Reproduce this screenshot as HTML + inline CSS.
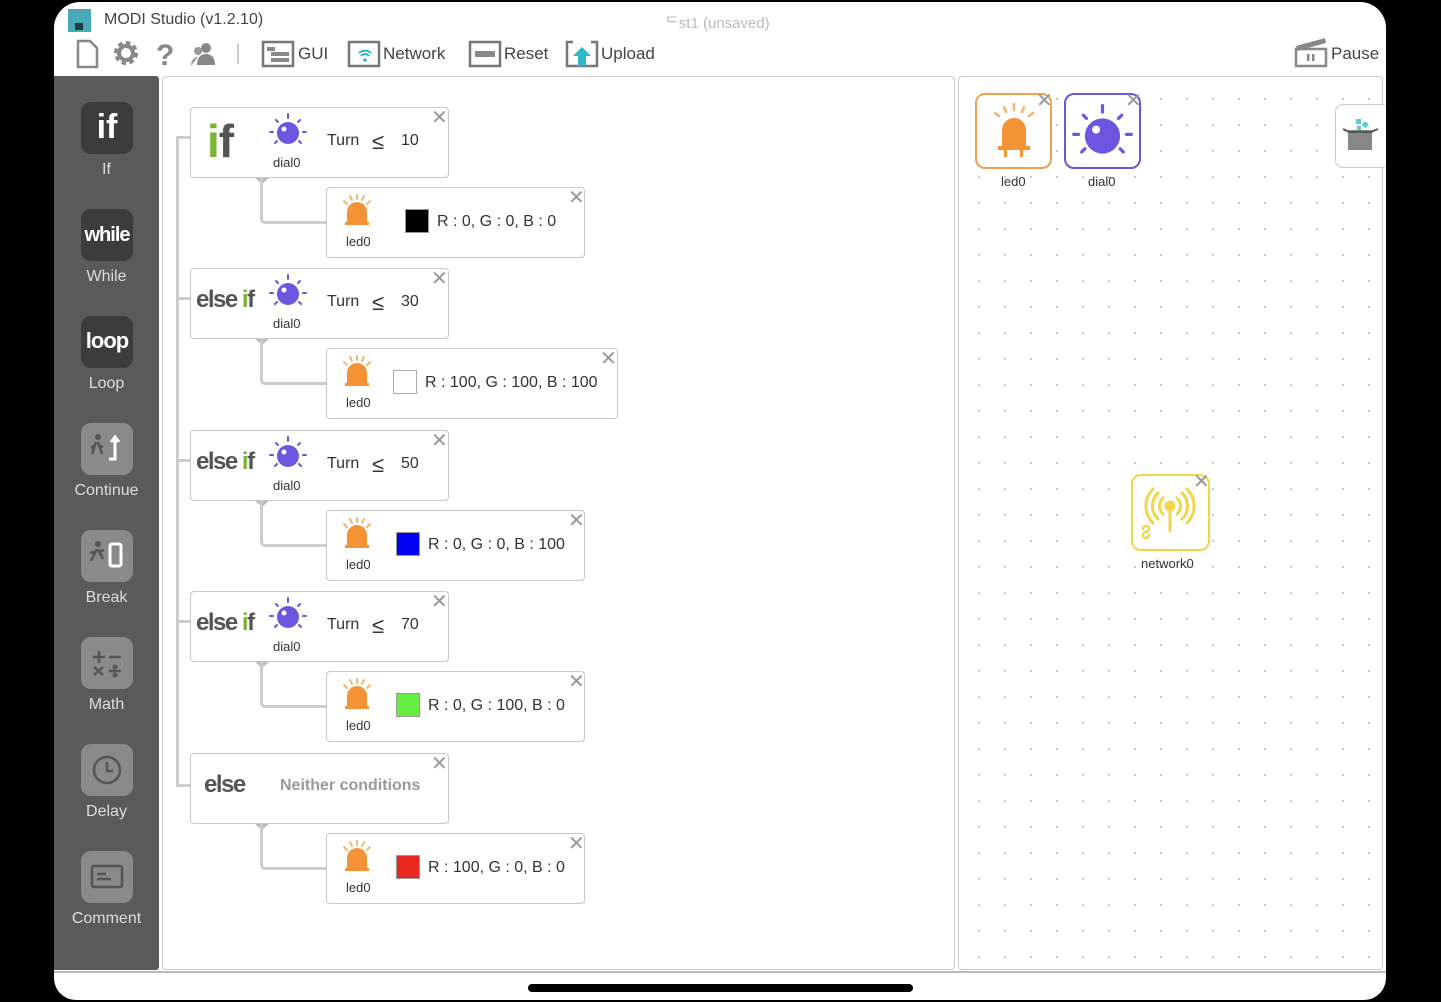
<!DOCTYPE html>
<html><head><meta charset="utf-8">
<style>
*{margin:0;padding:0;box-sizing:border-box}
body{width:1441px;height:1002px;background:#000;position:relative;overflow:hidden;font-family:"Liberation Sans","Noto Sans CJK KR",sans-serif;color:#333}
.abs{position:absolute}
#dev{left:54px;top:2px;width:1332px;height:998px;background:#fff;border-radius:26px 26px 22px 22px;overflow:hidden}
.tb{font-size:17px;color:#444}
#side{left:54px;top:76px;width:105px;height:894px;background:#5a5a5a;border-radius:0 3px 3px 0}
.sb{left:27px;width:52px;height:52px;border-radius:10px}
.sl{width:105px;left:0;text-align:center;color:#ddd;font-size:16px}
#canvas{left:162px;top:76px;width:793px;height:894px;border:1px solid #ccc;border-radius:4px;background:#fff}
#right{left:958px;top:76px;width:425px;height:894px;border:1px solid #ccc;border-radius:4px;background-color:#fff;background-image:radial-gradient(circle,#c8c8c8 1px,transparent 1.3px);background-size:26px 26px;background-position:7px 9px}
.blk{border:1.5px solid #c9c9c9;border-radius:4px;background:#fff;height:71px}
.x{font-size:20px;color:#999;line-height:1}
.lbl{font-size:13px;color:#333}
.t{font-size:16px;color:#333}
.ln{background:#ccc}
.ei{font-size:24px;font-weight:bold;letter-spacing:-1.5px;color:#555}
</style></head><body>
<svg width="0" height="0" style="position:absolute">
<defs>
<g id="dial"><circle cx="0" cy="0" r="11" fill="#6d55e0"/><circle cx="-4" cy="-4" r="2.5" fill="#fff"/>
<g stroke="#6d55e0" stroke-width="2" stroke-linecap="round"><line x1="0" y1="-19" x2="0" y2="-15"/><line x1="12" y1="-13" x2="10" y2="-11"/><line x1="-12" y1="-13" x2="-10" y2="-11"/><line x1="18" y1="-1" x2="15" y2="-1"/><line x1="-18" y1="-1" x2="-15" y2="-1"/><line x1="13" y1="10" x2="11" y2="8"/><line x1="-13" y1="10" x2="-11" y2="8"/></g></g>
<g id="led"><path d="M-10 10 V0 A10 10 0 0 1 10 0 V10 Z" fill="#f39336"/><rect x="-12" y="10" width="24" height="3" fill="#f39336"/>
<g stroke="#f4b574" stroke-width="2" stroke-linecap="round"><line x1="0" y1="-17" x2="0" y2="-13"/><line x1="7" y1="-16" x2="5" y2="-12"/><line x1="-7" y1="-16" x2="-5" y2="-12"/><line x1="13" y1="-11" x2="10" y2="-8"/><line x1="-13" y1="-11" x2="-10" y2="-8"/></g></g>
</defs></svg>
<div id="dev" class="abs"></div>
<div class="abs" style="left:68px;top:9px;width:23px;height:23px;background:#4aa9b6"></div>
<div class="abs" style="left:75px;top:23px;width:8px;height:7px;background:#1d3c44"></div>
<div class="abs tb" style="left:104px;top:11px;font-size:16px">MODI Studio (v1.2.10)</div>
<div class="abs" style="left:665px;top:12px;font-size:15px;color:#bbb">ᄃst1 (unsaved)</div>
<svg class="abs" style="left:70px;top:38px" width="180" height="32">
<path d="M8 3h12l7 7v19H8z" fill="none" stroke="#888" stroke-width="2.5"/>
<g transform="translate(56,15)"><circle r="9" fill="none" stroke="#888" stroke-width="6" stroke-dasharray="4 3"/><circle r="7" fill="none" stroke="#888" stroke-width="4"/><circle r="3" fill="#fff"/></g>
<text x="86" y="27" font-size="30" fill="#888" font-family="Liberation Sans" font-weight="bold">?</text>
<circle cx="136" cy="10" r="5" fill="#888"/><path d="M127 27c0-8 4-11 9-11s9 3 9 11z" fill="#888"/>
<circle cx="128" cy="13" r="4" fill="#999"/><path d="M121 28c0-6 3-9 7-9" fill="#999"/>
<line x1="168" y1="6" x2="168" y2="26" stroke="#ccc" stroke-width="2"/>
</svg>
<svg class="abs" style="left:261px;top:40px" width="34" height="28"><rect x="2" y="2" width="30" height="24" fill="none" stroke="#777" stroke-width="2.5"/><rect x="6" y="7" width="8" height="4" fill="#888"/><rect x="10" y="12" width="18" height="4" fill="#888"/><rect x="10" y="18" width="18" height="4" fill="#888"/></svg>
<div class="abs tb" style="left:298px;top:44px">GUI</div>
<svg class="abs" style="left:347px;top:40px" width="34" height="28"><rect x="2" y="2" width="30" height="24" fill="none" stroke="#777" stroke-width="2.5"/><path d="M12 13a9 9 0 0 1 12 0M14 16a5 5 0 0 1 8 0" fill="none" stroke="#2db7c9" stroke-width="2"/><circle cx="18" cy="20" r="1.8" fill="#2db7c9"/></svg>
<div class="abs tb" style="left:383px;top:44px">Network</div>
<svg class="abs" style="left:468px;top:40px" width="34" height="28"><rect x="2" y="2" width="30" height="24" fill="none" stroke="#777" stroke-width="2.5"/><rect x="7" y="11" width="20" height="6" fill="#888"/></svg>
<div class="abs tb" style="left:504px;top:44px">Reset</div>
<svg class="abs" style="left:565px;top:40px" width="34" height="28"><path d="M8 2H2v24h30V2h-6" fill="none" stroke="#777" stroke-width="2.5"/><path d="M17 7l9 9h-5v10h-8V16H8z" fill="#2db7c9"/></svg>
<div class="abs tb" style="left:601px;top:44px">Upload</div>
<svg class="abs" style="left:1293px;top:34px" width="36" height="34"><path d="M3 12L32 4l1 5L4 17z" fill="#888"/><rect x="3" y="15" width="30" height="17" fill="none" stroke="#888" stroke-width="2.5"/><rect x="14" y="20" width="2.5" height="7" fill="#888"/><rect x="19" y="20" width="2.5" height="7" fill="#888"/></svg>
<div class="abs tb" style="left:1331px;top:44px">Pause</div>
<div id="side" class="abs">
<div class="abs sb" style="top:26px;background:#3c3c3c;color:#fff;font-size:34px;font-weight:bold;text-align:center;line-height:50px">if</div>
<div class="abs sl" style="top:85px">If</div>
<div class="abs sb" style="top:133px;background:#3c3c3c;color:#fff;font-size:20px;font-weight:bold;text-align:center;line-height:52px;letter-spacing:-1px">while</div>
<div class="abs sl" style="top:192px">While</div>
<div class="abs sb" style="top:240px;background:#3c3c3c;color:#fff;font-size:22px;font-weight:bold;text-align:center;line-height:50px;letter-spacing:-1px">loop</div>
<div class="abs sl" style="top:299px">Loop</div>
<div class="abs sb" style="top:347px;background:#8a8a8a"><svg width="52" height="52"><circle cx="17" cy="14" r="3" fill="#555"/><path d="M15 19l-4 12M17 19l4 12M14 22l-4 3M17 22l5 2" stroke="#555" stroke-width="2.5"/><path d="M28 36h6V14M30 19l4-5 4 5" fill="none" stroke="#fff" stroke-width="3"/></svg></div>
<div class="abs sl" style="top:406px">Continue</div>
<div class="abs sb" style="top:454px;background:#8a8a8a"><svg width="52" height="52"><circle cx="17" cy="14" r="3" fill="#555"/><path d="M16 19l-6 12M17 19l5 10M14 22l-5 1M17 22l6 -2" stroke="#555" stroke-width="2.5"/><rect x="29" y="14" width="11" height="22" rx="2" fill="none" stroke="#fff" stroke-width="3"/></svg></div>
<div class="abs sl" style="top:513px">Break</div>
<div class="abs sb" style="top:561px;background:#8a8a8a"><svg width="52" height="52" stroke="#555" stroke-width="2.5"><path d="M12 20h12M18 14v12M28 20h12M13 30l9 8M22 30l-9 8M28 34h12"/><circle cx="34" cy="30" r="1.3" fill="#555"/><circle cx="34" cy="38" r="1.3" fill="#555"/></svg></div>
<div class="abs sl" style="top:620px">Math</div>
<div class="abs sb" style="top:668px;background:#8a8a8a"><svg width="52" height="52"><circle cx="26" cy="26" r="13" fill="none" stroke="#555" stroke-width="2.5"/><path d="M26 18v9h6" fill="none" stroke="#555" stroke-width="2.5"/></svg></div>
<div class="abs sl" style="top:727px">Delay</div>
<div class="abs sb" style="top:775px;background:#8a8a8a"><svg width="52" height="52"><rect x="11" y="15" width="30" height="21" rx="2" fill="none" stroke="#555" stroke-width="2.5"/><path d="M16 23h9M16 28h14" stroke="#555" stroke-width="2.5"/></svg></div>
<div class="abs sl" style="top:834px">Comment</div>
</div>
<div id="canvas" class="abs"></div>
<div id="right" class="abs"></div>
<div class="abs" style="left:54px;top:971px;width:1332px;height:2px;background:#bbb"></div>
<div class="abs" style="left:528px;top:984px;width:385px;height:8px;background:#000;border-radius:4px"></div>

<div class="abs" style="left:176px;top:137px;width:3px;height:650px;background:#ccc;border-radius:4px 0 0 4px"></div>
<div class="abs ln" style="left:176px;top:136px;width:14px;height:3px"></div>
<div class="abs ln" style="left:176px;top:297px;width:14px;height:3px"></div>
<div class="abs ln" style="left:176px;top:459px;width:14px;height:3px"></div>
<div class="abs ln" style="left:176px;top:620px;width:14px;height:3px"></div>
<div class="abs ln" style="left:176px;top:784px;width:14px;height:3px"></div>

<!-- G1 -->
<div class="abs" style="left:254px;top:177px;border-left:8px solid transparent;border-right:8px solid transparent;border-top:7px solid #bbb"></div>
<div class="abs" style="left:260px;top:178px;width:66px;height:46px;border-left:3px solid #ccc;border-bottom:3px solid #ccc;border-radius:0 0 0 5px"></div>
<div class="abs blk" style="left:190px;top:107px;width:259px"></div>
<div class="abs" style="left:207px;top:113px;font-size:46px;font-weight:bold;letter-spacing:-1px;line-height:56px"><span style="color:#7cb334">i</span><span style="color:#555">f</span></div>
<div class="abs x" style="left:431px;top:108px">✕</div>
<svg class="abs" style="left:268px;top:113px" width="40" height="40"><use href="#dial" x="20" y="20"/></svg>
<div class="abs lbl" style="left:273px;top:155px">dial0</div>
<div class="abs t" style="left:327px;top:132px">Turn</div><div class="abs t" style="left:372px;top:129px;font-size:22px">≤</div><div class="abs t" style="left:401px;top:132px">10</div>
<div class="abs blk" style="left:326px;top:187px;width:259px"></div>
<div class="abs x" style="left:568px;top:188px">✕</div>
<svg class="abs" style="left:342px;top:192px" width="30" height="36"><use href="#led" x="15" y="20"/></svg>
<div class="abs lbl" style="left:346px;top:234px">led0</div>
<div class="abs" style="left:405px;top:209px;width:24px;height:24px;background:#000;border:1px solid #999"></div>
<div class="abs t" style="left:437px;top:213px">R : 0, G : 0, B : 0</div>

<!-- G2 -->
<div class="abs" style="left:254px;top:338px;border-left:8px solid transparent;border-right:8px solid transparent;border-top:7px solid #bbb"></div>
<div class="abs" style="left:260px;top:339px;width:66px;height:46px;border-left:3px solid #ccc;border-bottom:3px solid #ccc;border-radius:0 0 0 5px"></div>
<div class="abs blk" style="left:190px;top:268px;width:259px"></div>
<div class="abs ei" style="left:196px;top:286px">else <span style="color:#7cb334">i</span>f</div>
<div class="abs x" style="left:431px;top:269px">✕</div>
<svg class="abs" style="left:268px;top:274px" width="40" height="40"><use href="#dial" x="20" y="20"/></svg>
<div class="abs lbl" style="left:273px;top:316px">dial0</div>
<div class="abs t" style="left:327px;top:293px">Turn</div><div class="abs t" style="left:372px;top:290px;font-size:22px">≤</div><div class="abs t" style="left:401px;top:293px">30</div>
<div class="abs blk" style="left:326px;top:348px;width:292px"></div>
<div class="abs x" style="left:600px;top:349px">✕</div>
<svg class="abs" style="left:342px;top:353px" width="30" height="36"><use href="#led" x="15" y="20"/></svg>
<div class="abs lbl" style="left:346px;top:395px">led0</div>
<div class="abs" style="left:393px;top:370px;width:24px;height:24px;background:#fff;border:1px solid #aaa"></div>
<div class="abs t" style="left:425px;top:374px">R : 100, G : 100, B : 100</div>

<!-- G3 -->
<div class="abs" style="left:254px;top:500px;border-left:8px solid transparent;border-right:8px solid transparent;border-top:7px solid #bbb"></div>
<div class="abs" style="left:260px;top:501px;width:66px;height:46px;border-left:3px solid #ccc;border-bottom:3px solid #ccc;border-radius:0 0 0 5px"></div>
<div class="abs blk" style="left:190px;top:430px;width:259px"></div>
<div class="abs ei" style="left:196px;top:448px">else <span style="color:#7cb334">i</span>f</div>
<div class="abs x" style="left:431px;top:431px">✕</div>
<svg class="abs" style="left:268px;top:436px" width="40" height="40"><use href="#dial" x="20" y="20"/></svg>
<div class="abs lbl" style="left:273px;top:478px">dial0</div>
<div class="abs t" style="left:327px;top:455px">Turn</div><div class="abs t" style="left:372px;top:452px;font-size:22px">≤</div><div class="abs t" style="left:401px;top:455px">50</div>
<div class="abs blk" style="left:326px;top:510px;width:259px"></div>
<div class="abs x" style="left:568px;top:511px">✕</div>
<svg class="abs" style="left:342px;top:515px" width="30" height="36"><use href="#led" x="15" y="20"/></svg>
<div class="abs lbl" style="left:346px;top:557px">led0</div>
<div class="abs" style="left:396px;top:532px;width:24px;height:24px;background:#0000ee;border:1px solid #999"></div>
<div class="abs t" style="left:428px;top:536px">R : 0, G : 0, B : 100</div>

<!-- G4 -->
<div class="abs" style="left:254px;top:661px;border-left:8px solid transparent;border-right:8px solid transparent;border-top:7px solid #bbb"></div>
<div class="abs" style="left:260px;top:662px;width:66px;height:46px;border-left:3px solid #ccc;border-bottom:3px solid #ccc;border-radius:0 0 0 5px"></div>
<div class="abs blk" style="left:190px;top:591px;width:259px"></div>
<div class="abs ei" style="left:196px;top:609px">else <span style="color:#7cb334">i</span>f</div>
<div class="abs x" style="left:431px;top:592px">✕</div>
<svg class="abs" style="left:268px;top:597px" width="40" height="40"><use href="#dial" x="20" y="20"/></svg>
<div class="abs lbl" style="left:273px;top:639px">dial0</div>
<div class="abs t" style="left:327px;top:616px">Turn</div><div class="abs t" style="left:372px;top:613px;font-size:22px">≤</div><div class="abs t" style="left:401px;top:616px">70</div>
<div class="abs blk" style="left:326px;top:671px;width:259px"></div>
<div class="abs x" style="left:568px;top:672px">✕</div>
<svg class="abs" style="left:342px;top:676px" width="30" height="36"><use href="#led" x="15" y="20"/></svg>
<div class="abs lbl" style="left:346px;top:718px">led0</div>
<div class="abs" style="left:396px;top:693px;width:24px;height:24px;background:#66ee44;border:1px solid #999"></div>
<div class="abs t" style="left:428px;top:697px">R : 0, G : 100, B : 0</div>

<!-- G5 -->
<div class="abs" style="left:254px;top:823px;border-left:8px solid transparent;border-right:8px solid transparent;border-top:7px solid #bbb"></div>
<div class="abs" style="left:260px;top:824px;width:66px;height:46px;border-left:3px solid #ccc;border-bottom:3px solid #ccc;border-radius:0 0 0 5px"></div>
<div class="abs blk" style="left:190px;top:753px;width:259px"></div>
<div class="abs ei" style="left:204px;top:771px">else</div>
<div class="abs" style="left:280px;top:777px;font-size:16px;font-weight:bold;color:#999">Neither conditions</div>
<div class="abs x" style="left:431px;top:754px">✕</div>
<div class="abs blk" style="left:326px;top:833px;width:259px"></div>
<div class="abs x" style="left:568px;top:834px">✕</div>
<svg class="abs" style="left:342px;top:838px" width="30" height="36"><use href="#led" x="15" y="20"/></svg>
<div class="abs lbl" style="left:346px;top:880px">led0</div>
<div class="abs" style="left:396px;top:855px;width:24px;height:24px;background:#e8281e;border:1px solid #999"></div>
<div class="abs t" style="left:428px;top:859px">R : 100, G : 0, B : 0</div>

<!-- right panel -->
<div class="abs" style="left:975px;top:93px;width:77px;height:76px;border:2px solid #f0a050;border-radius:10px;background:#fff"></div>
<svg class="abs" style="left:985px;top:100px" width="60" height="62"><path d="M17 48V30a12 12 0 0 1 24 0v18z" fill="#f39336"/><rect x="13" y="46" width="32" height="4" fill="#f39336"/><rect x="19" y="50" width="3" height="7" fill="#f39336"/><rect x="35" y="50" width="3" height="7" fill="#f39336"/><g stroke="#f4b574" stroke-width="2.5" stroke-linecap="round"><line x1="29" y1="4" x2="29" y2="10"/><line x1="39" y1="7" x2="37" y2="12"/><line x1="19" y1="7" x2="21" y2="12"/><line x1="48" y1="13" x2="44" y2="16"/><line x1="10" y1="13" x2="14" y2="16"/></g></svg>
<div class="abs x" style="left:1036px;top:91px">✕</div>
<div class="abs lbl" style="left:1001px;top:174px">led0</div>
<div class="abs" style="left:1064px;top:93px;width:77px;height:76px;border:2px solid #6d55e0;border-radius:10px;background:#fff"></div>
<svg class="abs" style="left:1064px;top:93px" width="77" height="76"><g transform="translate(38.5,43) scale(1.6)"><use href="#dial"/></g></svg>
<div class="abs x" style="left:1125px;top:91px">✕</div>
<div class="abs lbl" style="left:1088px;top:174px">dial0</div>
<div class="abs" style="left:1335px;top:104px;width:50px;height:64px;border:1.5px solid #ccc;border-right:none;border-radius:8px 0 0 8px;background:#fff"></div>
<svg class="abs" style="left:1342px;top:116px" width="38" height="40"><rect x="6" y="14" width="24" height="20" fill="#888"/><path d="M1 13l6 3h22l7-3" stroke="#555" stroke-width="2" fill="none"/><rect x="14" y="3" width="5" height="5" fill="#5cc8d8"/><rect x="21" y="6" width="5" height="5" fill="#5cc8d8" transform="rotate(30 23 8)"/><rect x="15" y="10" width="4" height="4" fill="#5cc8d8"/></svg>
<div class="abs" style="left:1131px;top:474px;width:79px;height:77px;border:2px solid #f1d54a;border-radius:10px;background:#fff"></div>
<svg class="abs" style="left:1131px;top:474px" width="80" height="78" fill="none" stroke="#f1d54a" stroke-width="3" stroke-linecap="round"><circle cx="39" cy="32" r="4" fill="#f1d54a"/><line x1="39" y1="34" x2="39" y2="57"/><path d="M32 24a11 11 0 0 0 0 16M46 24a11 11 0 0 1 0 16M27 19a18 18 0 0 0 0 26M51 19a18 18 0 0 1 0 26M22 15a24 24 0 0 0 0 34M56 15a24 24 0 0 1 0 34"/><path d="M12 55a3 3 0 1 1 3 3a3 3 0 1 0 3 3" stroke-width="2.5"/></svg>
<div class="abs x" style="left:1193px;top:472px">✕</div>
<div class="abs lbl" style="left:1141px;top:556px">network0</div>
</body></html>
